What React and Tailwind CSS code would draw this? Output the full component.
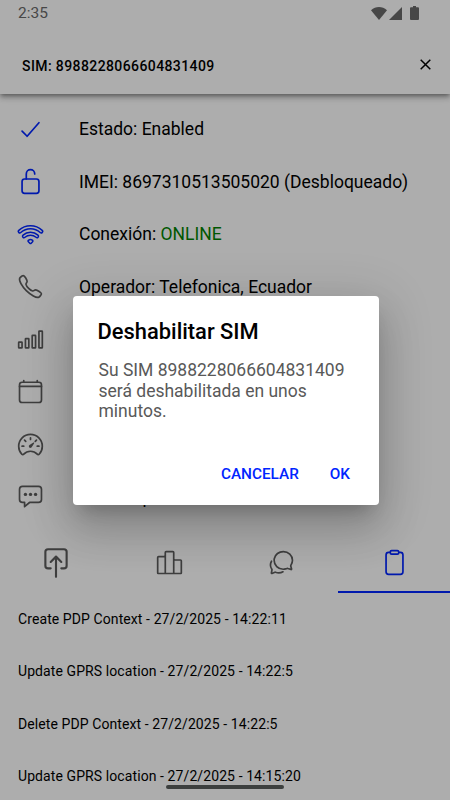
import React from "react";
import {
  IoCalendarClearOutline,
  IoCallOutline,
  IoCellularOutline,
  IoChatboxEllipsesOutline,
  IoChatbubblesOutline,
  IoCheckmarkOutline,
  IoClipboardOutline,
  IoLockOpenOutline,
  IoPodiumOutline,
  IoPushOutline,
  IoSpeedometerOutline,
} from "react-icons/io5";

const WifiIcon = ({ className }) => (
  <svg viewBox="0 0 27 27" className={className} fill="none" stroke="currentColor">
    <g strokeLinecap="round" strokeWidth="4.4">
      <path d="M2.8 10.4a15.8 15.8 0 0 1 21.4 0" />
      <path d="M7 15.2a9.8 9.8 0 0 1 13 0" />
    </g>
    <g stroke="#adadad" strokeLinecap="round" strokeWidth="1.4">
      <path d="M2.8 10.4a15.8 15.8 0 0 1 21.4 0" />
      <path d="M7 15.2a9.8 9.8 0 0 1 13 0" />
    </g>
    <path
      strokeWidth="1.5"
      strokeLinejoin="round"
      d="M11.4 19.4q2.1-1.6 4.2 0q.7.7 0 1.4l-1.4 1.4q-.7.6-1.4 0l-1.4-1.4q-.7-.7 0-1.4Z"
    />
  </svg>
);

const details = [
  { icon: IoCheckmarkOutline, text: "Estado: Enabled", active: true },
  { icon: IoLockOpenOutline, text: "IMEI: 8697310513505020 (Desbloqueado)", active: true },
  { icon: WifiIcon, text: "Conexión: ", status: "ONLINE", active: true },
  { icon: IoCallOutline, text: "Operador: Telefonica, Ecuador" },
  { icon: IoCellularOutline, text: "" },
  { icon: IoCalendarClearOutline, text: "" },
  { icon: IoSpeedometerOutline, text: "" },
  { icon: IoChatboxEllipsesOutline, text: "SMS    tipo: MT" },
];

const events = [
  "Create PDP Context - 27/2/2025 - 14:22:11",
  "Update GPRS location - 27/2/2025 - 14:22:5",
  "Delete PDP Context - 27/2/2025 - 14:22:5",
  "Update GPRS location - 27/2/2025 - 14:15:20",
];

function StatusBar() {
  return (
    <div className="flex h-[27px] items-center justify-between pr-[31px] pl-[18px] text-[#474747]">
      <span className="text-[15.5px]">2:35</span>
      <div className="flex items-start">
        <svg className="h-[13px] w-4" viewBox="0 0 16 13" fill="currentColor">
          <path d="M0 3.2C4.8-1 11.2-1 16 3.2L8 13Z" />
        </svg>
        <svg className="ml-[2px] h-[13px] w-[13px]" viewBox="0 0 13 13" fill="currentColor">
          <path d="M13 0V13H0Z" />
        </svg>
        <svg className="-mt-px ml-2 h-[14px] w-[9px]" viewBox="0 0 9 14" fill="currentColor">
          <path d="M3 0h3v1.3h2a1 1 0 0 1 1 1V13a1 1 0 0 1-1 1H1a1 1 0 0 1-1-1V2.3a1 1 0 0 1 1-1h2Z" />
        </svg>
      </div>
    </div>
  );
}

function DetailRow({ item }) {
  const Icon = item.icon;
  return (
    <div className="flex h-[52.5px] items-center pl-[17px]">
      <div className={item.active ? "w-[62px] text-[#0019ad]" : "w-[62px] text-[#3e3e3e]"}>
        <Icon className="h-[27px] w-[27px]" />
      </div>
      <span className="text-[17.5px] whitespace-pre">
        {item.text}
        {item.status && <span className="text-[#005700]">{item.status}</span>}
      </span>
    </div>
  );
}

function Dialog() {
  return (
    <div className="absolute top-[296px] left-[72.5px] flex h-[208.5px] w-[306.5px] flex-col rounded-[4px] bg-white px-[26px] pt-[21px] shadow-[0_12px_16px_-8px_rgba(0,0,0,0.2),0_26px_42px_3px_rgba(0,0,0,0.14),0_10px_50px_9px_rgba(0,0,0,0.12)]">
      <h2 className="-ml-px pt-px text-[21.9px] leading-[28px] font-medium whitespace-nowrap">
        Deshabilitar SIM
      </h2>
      <p className="mt-[14px] text-[17.5px] leading-[20.5px] text-[#595959]">
        Su SIM 8988228066604831409
        <br />
        será deshabilitada en unos
        <br />
        minutos.
      </p>
      <div className="mt-[41px] flex justify-end gap-[31px] pr-[3px] text-[15.3px] leading-[22px] font-medium text-[#0025ff]">
        <button>CANCELAR</button>
        <button>OK</button>
      </div>
    </div>
  );
}

export default function App() {
  return (
    <div className="relative h-[800px] w-[450px] overflow-hidden bg-[#adadad] font-['Roboto',sans-serif] text-black">
      <header className="h-[94px] shadow-[0_2px_4px_-1px_rgba(0,0,0,0.35),0_4px_5px_rgba(0,0,0,0.18),0_1px_10px_rgba(0,0,0,0.12)]">
        <StatusBar />
        <div className="flex h-[79px] items-center justify-between pr-[19px] pl-[22px]">
          <h1 className="text-[14px] font-medium tracking-[0.4px]">SIM: 8988228066604831409</h1>
          <svg className="mb-[5px] h-[11px] w-[11px]" viewBox="0 0 11 11" stroke="currentColor" strokeWidth="1.5">
            <path d="M.7.7l9.6 9.6M10.3.7L.7 10.3" />
          </svg>
        </div>
      </header>

      <div className="pt-[9px]">
        {details.map((item, i) => (
          <DetailRow key={i} item={item} />
        ))}
      </div>

      <nav className="grid h-[70px] grid-cols-4 text-[#3e3e3e]">
        <div className="flex items-center justify-center pt-[9px]">
          <IoPushOutline className="h-[34px] w-[34px]" />
        </div>
        <div className="flex items-center justify-center pt-[9px] pl-px">
          <IoPodiumOutline className="h-[27px] w-[27px]" />
        </div>
        <div className="flex items-center justify-center pt-[9px] pl-px">
          <IoChatbubblesOutline className="h-[27px] w-[27px]" />
        </div>
        <div className="ml-[0.5px] flex items-center justify-center border-b-2 border-[#0019ad] pt-[11px] pl-px text-[#0019ad]">
          <IoClipboardOutline className="h-[27px] w-[27px]" />
        </div>
      </nav>

      <ul>
        {events.map((event, i) => (
          <li key={i} className="flex h-[52.5px] items-center pl-[18px] text-[14px] tracking-[0.09px]">
            {event}
          </li>
        ))}
      </ul>

      <Dialog />
      <div className="absolute top-[785px] left-[166px] h-[4px] w-[118px] rounded-full bg-[#3c3f3e]" />
    </div>
  );
}
